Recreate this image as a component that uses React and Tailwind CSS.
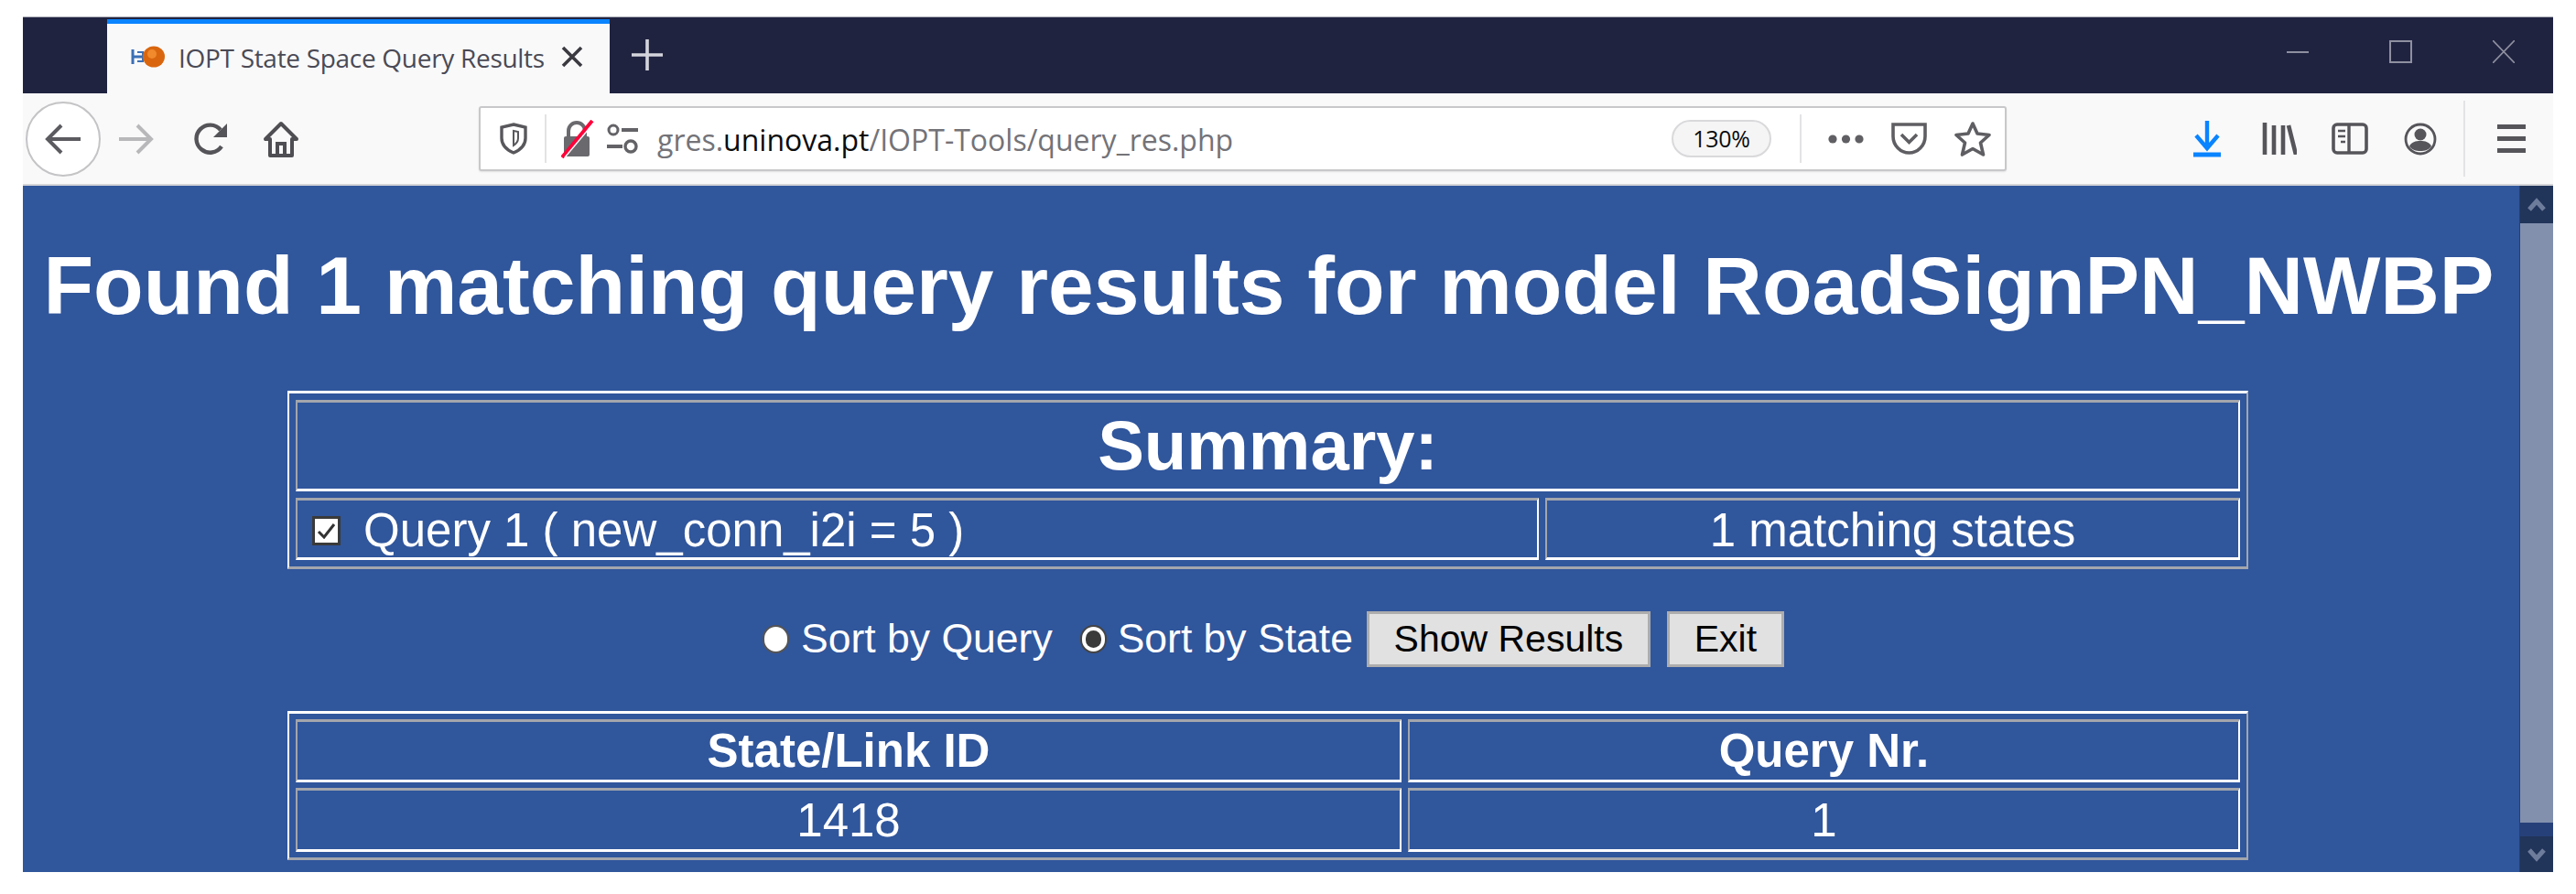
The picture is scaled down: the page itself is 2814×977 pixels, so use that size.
const UI = "font-['Open_Sans','Noto_Sans',sans-serif]";

function Favicon() {
  return (
    <svg width="37" height="24" viewBox="0 0 37 24" className="shrink-0">
      <path d="M2 4v16M2 12h12" stroke="#3a6fb5" strokeWidth="3" fill="none" />
      <path d="M7 7h6v10H7" stroke="#3a6fb5" strokeWidth="2" fill="none" />
      <ellipse cx="25" cy="12" rx="12" ry="11.5" fill="#d9660f" />
      <ellipse cx="23" cy="9" rx="5" ry="5" fill="#f08a2c" />
    </svg>
  );
}

function Cell({ children, className = "", header = false, ...rest }) {
  const Tag = header ? "th" : "td";
  return (
    <Tag
      {...rest}
      className={`border-y-[3px] border-x-[2px] border-t-[#a3a6ac] border-l-[#a3a6ac] border-r-white border-b-white p-0 text-white ${className}`}
    >
      {children}
    </Tag>
  );
}

const tableCls =
  "w-[2142px] border-separate border-y-[3px] border-x-[2px] border-t-white border-l-white border-r-[#a3a6ac] border-b-[#a3a6ac] table-fixed";

export default function App() {
  return (
    <div className="w-[2814px] h-[977px] bg-white overflow-hidden pt-[18px] px-[25px] font-['Liberation_Sans',Arial,sans-serif]">
      {/* tab strip */}
      <div className="h-[84px] bg-[#202340] border-t border-[#a9abb3] flex items-end">
        <div className="w-[92px] shrink-0" />
        <div className="w-[549px] h-[81px] shrink-0 bg-[#f9f9fa] flex flex-col">
          <div className="h-[5px] bg-[#0a84ff]" />
          <div className="flex-1 flex items-center pl-[26px] pb-[4px]">
            <Favicon />
            <span className={`ml-[15px] w-[397px] pt-[2px] whitespace-nowrap text-[28px] leading-none text-[#4a4a55] ${UI} tracking-[-0.3px]`}>
              IOPT State Space Query Results
            </span>
            <svg width="24" height="24" viewBox="0 0 24 24" className="ml-[21px]">
              <path d="M2 2l20 20M22 2L2 22" stroke="#3a3a40" strokeWidth="3.6" fill="none" />
            </svg>
          </div>
        </div>
        <div className="self-center ml-[24px] mb-[2px]">
          <svg width="34" height="34" viewBox="0 0 34 34">
            <path d="M17 0v34M0 17h34" stroke="#d4d5dc" strokeWidth="3.6" fill="none" />
          </svg>
        </div>
        <div className="self-center ml-auto flex items-center mb-[8px] mr-[42px]">
          <div className="w-[24px] h-[2px] bg-[#8e90a0]" />
          <div className="ml-[88px] w-[25px] h-[25px] border-2 border-[#8e90a0]" />
          <svg width="24" height="25" viewBox="0 0 24 25" className="ml-[88px]">
            <path d="M0 0l24 25M24 0L0 25" stroke="#8e90a0" strokeWidth="1.6" fill="none" />
          </svg>
        </div>
      </div>

      {/* toolbar */}
      <div className="h-[101px] bg-[#f9f9fa] border-b-2 border-[#d5d5d8] flex items-center">
        <div className="ml-[3px] w-[82px] h-[82px] rounded-full bg-white border-2 border-[#c4c4c6] flex items-center justify-center shrink-0">
          <svg width="40" height="34" viewBox="0 0 40 34">
            <path d="M2 17h37M18 2L3 17l15 15" stroke="#5b5b60" strokeWidth="4" fill="none" />
          </svg>
        </div>
        <svg width="38" height="34" viewBox="0 0 38 34" className="ml-[20px] shrink-0">
          <path d="M0 17h36M20 2l15 15-15 15" stroke="#b8b8ba" strokeWidth="4" fill="none" />
        </svg>
        <svg width="38" height="36" viewBox="0 0 38 36" className="ml-[44px] shrink-0">
          <path d="M30 26a15 15 0 1 1-1-18" stroke="#555559" strokeWidth="4.4" fill="none" />
          <path d="M36 1v15H21z" fill="#555559" />
        </svg>
        <svg width="40" height="40" viewBox="0 0 40 40" className="ml-[37px] shrink-0">
          <path d="M20 3L3 20h5v18h24V20h5z" stroke="#4f4f53" strokeWidth="4" strokeLinejoin="round" fill="none" />
          <path d="M16 38V25h8v13" stroke="#4f4f53" strokeWidth="4" fill="none" />
        </svg>

        {/* url bar */}
        <div className="ml-[196px] w-[1669px] h-[71px] shrink-0 bg-white border-2 border-[#c8c8ca] rounded-[3px] flex items-center shadow-[0_1px_2px_rgba(0,0,0,0.1)]">
          <svg width="30" height="35" viewBox="0 0 30 35" className="ml-[21px] shrink-0">
            <path d="M15 2l13 3v12c0 8-6 13-13 16C8 30 2 25 2 17V5z" stroke="#58585c" strokeWidth="3.4" fill="none" />
            <path d="M15 9l5 1v7c0 4-2 6-5 8z" fill="none" stroke="#58585c" strokeWidth="2" />
          </svg>
          <div className="ml-[19px] w-[2px] h-[53px] bg-[#e3e3e5] shrink-0" />
          <svg width="36" height="42" viewBox="0 0 36 42" className="ml-[16px] shrink-0">
            <path d="M8 18v-6a9 9 0 0 1 18 0v6" stroke="#6a6a6e" strokeWidth="4" fill="none" />
            <rect x="3" y="18" width="28" height="22" rx="2" fill="#6a6a6e" />
            <path d="M1 41L34 1" stroke="#ff0039" strokeWidth="4" />
            <path d="M4 41L36 3" stroke="#ffffff" strokeWidth="1.4" />
          </svg>
          <svg width="34" height="36" viewBox="0 0 34 36" className="ml-[14px] shrink-0">
            <circle cx="7" cy="8" r="5" stroke="#636367" strokeWidth="3" fill="none" />
            <path d="M16 8h18" stroke="#636367" strokeWidth="4" />
            <path d="M0 26h17" stroke="#636367" strokeWidth="4" />
            <circle cx="26" cy="26" r="6" stroke="#636367" strokeWidth="3.4" fill="none" />
          </svg>
          <span className={`ml-[21px] w-[628px] pt-[2px] whitespace-nowrap text-[32px] leading-none text-[#737378] ${UI}`}>
            gres.<span className="text-[#0c0c0d]">uninova.pt</span>/IOPT-Tools/query_res.php
          </span>
          <div className="ml-[480px] w-[109px] h-[41px] rounded-full bg-[#f5f5f6] border-2 border-[#d9d9db] flex items-center justify-center shrink-0">
            <span className={`text-[25px] leading-none text-[#0c0c0d] ${UI} tracking-[-0.3px]`}>130%</span>
          </div>
          <div className="ml-[31px] w-[2px] h-[53px] bg-[#e3e3e5] shrink-0" />
          <svg width="39" height="12" viewBox="0 0 39 12" className="ml-[29px] shrink-0">
            <circle cx="5" cy="6" r="4.6" fill="#606064" />
            <circle cx="19.500" cy="6" r="4.6" fill="#606064" />
            <circle cx="34" cy="6" r="4.6" fill="#606064" />
          </svg>
          <svg width="39" height="35" viewBox="0 0 39 35" className="ml-[30px] shrink-0">
            <path d="M2 2h35v13c0 10-8 18-17.500 18S2 25 2 15z" stroke="#5f5f63" strokeWidth="3.6" fill="none" />
            <path d="M11 13l8.500 8.500L28 13" stroke="#5f5f63" strokeWidth="3.6" fill="none" />
          </svg>
          <svg width="40" height="40" viewBox="0 0 40 40" className="ml-[30px] shrink-0">
            <path d="M20 3l5 11 13 1.500-9.500 8.500 3 13L20 30.500 8.500 37l3-13L2 15.500 15 14z" stroke="#5f5f63" strokeWidth="3.6" strokeLinejoin="round" fill="none" />
          </svg>
        </div>

        <svg width="30" height="40" viewBox="0 0 30 40" className="ml-[204px] shrink-0">
          <path d="M15 0v31M3 16l12 14 12-14" stroke="#0a84ff" strokeWidth="4.4" fill="none" />
          <path d="M0 37h30" stroke="#0a84ff" strokeWidth="5" />
        </svg>
        <svg width="38" height="35" viewBox="0 0 38 35" className="ml-[45px] shrink-0">
          <path d="M3 0v35M13 3v32M23 3v32" stroke="#55555a" strokeWidth="4.6" fill="none" />
          <path d="M29 3l8 32" stroke="#55555a" strokeWidth="4.6" fill="none" />
        </svg>
        <svg width="40" height="35" viewBox="0 0 40 35" className="ml-[38px] shrink-0">
          <rect x="2" y="2" width="36" height="31" rx="4" stroke="#55555a" strokeWidth="3.6" fill="none" />
          <path d="M19 2v31" stroke="#55555a" strokeWidth="3.4" />
          <path d="M7 9h8M7 15h8M10 21h5" stroke="#55555a" strokeWidth="2.4" />
        </svg>
        <svg width="36" height="36" viewBox="0 0 36 36" className="ml-[39px] shrink-0">
          <circle cx="18" cy="18" r="16" stroke="#55555a" strokeWidth="2.8" fill="none" />
          <circle cx="18" cy="13" r="6.500" fill="#55555a" />
          <path d="M6 26c2-5 7-6 12-6s10 1 12 6c-3 4-7 5-12 5s-9-1-12-5z" fill="#55555a" />
        </svg>
        <div className="ml-[29px] w-[2px] h-[83px] bg-[#e3e3e5] shrink-0" />
        <div className="ml-[35px] w-[31px] flex flex-col gap-[8px] shrink-0">
          <div className="h-[5px] bg-[#55555a]" />
          <div className="h-[5px] bg-[#55555a]" />
          <div className="h-[5px] bg-[#55555a]" />
        </div>
      </div>

      {/* page */}
      <div className="h-[750px] flex bg-[#30569c] overflow-hidden">
        <div className="w-[2727px] pr-[7px] shrink-0 flex flex-col items-center text-white">
          <h1 className="mt-[57px] ml-[2px] h-[105px] text-[89.4px] leading-[105px] font-bold whitespace-nowrap">
            Found 1 matching query results for model RoadSignPN_NWBP
          </h1>
          <table className={`mt-[62px] border-spacing-[7px] ${tableCls}`}>
            <colgroup>
              <col className="w-[1358px]" />
              <col />
            </colgroup>
            <tbody>
              <tr>
                <Cell header colSpan={2} className="h-[100px] text-[76px] leading-none font-bold text-center">
                  Summary:
                </Cell>
              </tr>
              <tr>
                <Cell className="h-[68px] pt-[3px] text-[51px] leading-none">
                  <div className="flex items-center pl-[16px]">
                    <div className="w-[31px] h-[32px] bg-white border-[3px] border-[#3a3a3a] flex items-center justify-center shrink-0">
                      <svg width="21" height="18" viewBox="0 0 21 18">
                        <path d="M2 10l6 6L19 2" stroke="#333" strokeWidth="3" fill="none" />
                      </svg>
                    </div>
                    <span className="ml-[25px] whitespace-nowrap">Query 1 ( new_conn_i2i = 5 )</span>
                  </div>
                </Cell>
                <Cell className="pt-[3px] text-[51px] leading-none text-center">1 matching states</Cell>
              </tr>
            </tbody>
          </table>
          <div className="mt-[46px] ml-[12px] h-[61px] flex items-center text-[44.5px] leading-none">
            <div className="w-[29px] h-[31px] rounded-full bg-white border-2 border-[#555] shrink-0" />
            <span className="ml-[13px] whitespace-nowrap">Sort by Query</span>
            <div className="ml-[30px] w-[29px] h-[31px] rounded-full bg-white border-2 border-[#444] flex items-center justify-center shrink-0">
              <div className="w-[17px] h-[19px] rounded-full bg-[#3a3a3a]" />
            </div>
            <span className="ml-[12px] whitespace-nowrap">Sort by State</span>
            <div className="ml-[15px] w-[310px] h-[61px] bg-[#e1e1e1] border-[3px] border-[#adadad] text-black text-[41px] flex items-center justify-center">
              Show Results
            </div>
            <div className="ml-[18px] w-[128px] h-[61px] bg-[#e1e1e1] border-[3px] border-[#adadad] text-black text-[41px] flex items-center justify-center">
              Exit
            </div>
          </div>
          <table className={`mt-[48px] border-spacing-x-[7px] border-spacing-y-[6px] ${tableCls}`}>
            <colgroup>
              <col className="w-[1208px]" />
              <col />
            </colgroup>
            <tbody>
              <tr>
                <Cell header className="h-[69px] text-[51px] leading-none font-bold text-center">State/Link ID</Cell>
                <Cell header className="text-[51px] leading-none font-bold text-center">Query Nr.</Cell>
              </tr>
              <tr>
                <Cell className="h-[70px] text-[51px] leading-none text-center">1418</Cell>
                <Cell className="text-[51px] leading-none text-center">1</Cell>
              </tr>
            </tbody>
          </table>
        </div>

        {/* scrollbar */}
        <div className="w-[37px] shrink-0 flex flex-col bg-[#264079] border-l border-[#263f73]">
          <div className="h-[41px] bg-[#213459] flex items-center justify-center">
            <svg width="20" height="18" viewBox="0 0 20 18">
              <path d="M2 14l8-9 8 9" stroke="#6e7c9c" strokeWidth="5" fill="none" />
            </svg>
          </div>
          <div className="h-[655px] bg-[#8290ae]" />
          <div className="h-[15px]" />
          <div className="h-[39px] bg-[#213459] flex items-center justify-center">
            <svg width="20" height="18" viewBox="0 0 20 18">
              <path d="M2 4l8 9 8-9" stroke="#6e7c9c" strokeWidth="5" fill="none" />
            </svg>
          </div>
        </div>
      </div>
    </div>
  );
}
